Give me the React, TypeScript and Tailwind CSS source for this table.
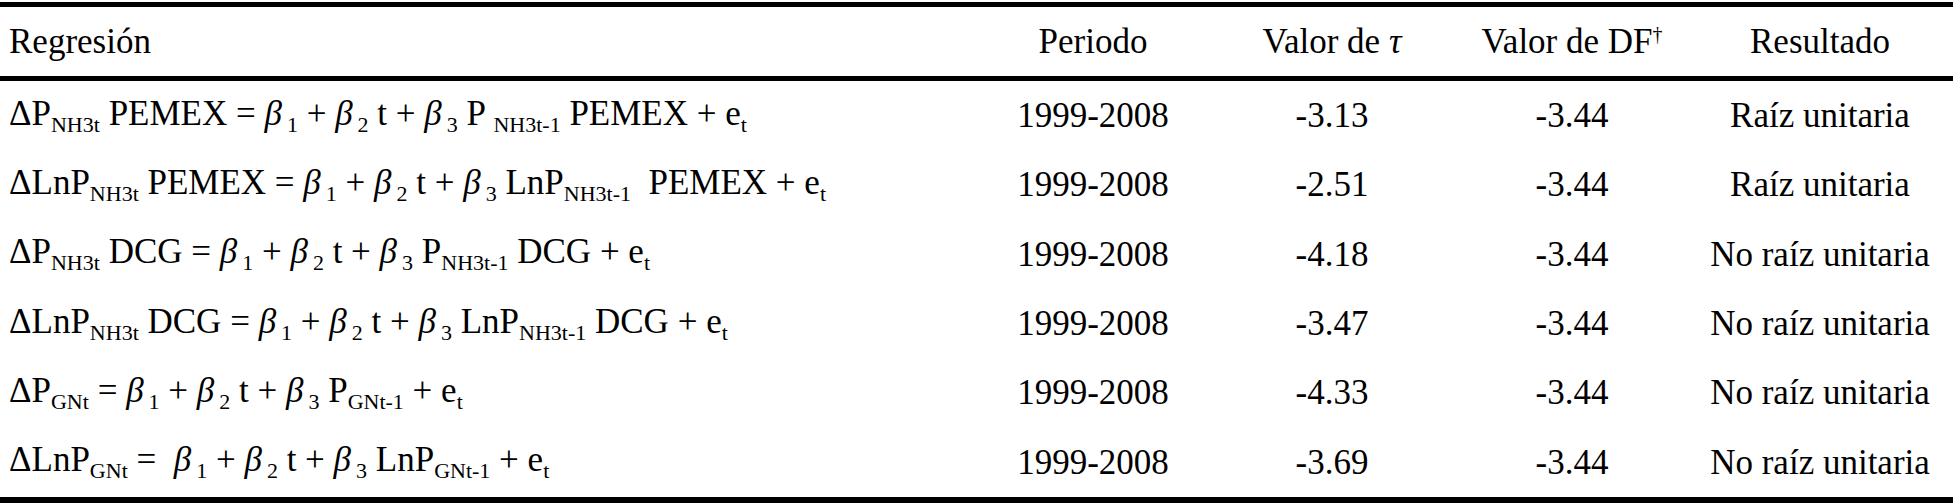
import React from "react";

const cols = "grid grid-cols-[970px_246px_232px_248px_248px] items-center";

function S({ children, className = "" }: { children: React.ReactNode; className?: string }) {
  return <span className={`text-[22px] align-[-7px] ${className}`}>{children}</span>;
}

function B({ n }: { n: string }) {
  return (
    <>
      <i>β</i>
      <S className="ml-[5px]">{n}</S>
    </>
  );
}

interface RowType {
  formula: React.ReactNode;
  tau: string;
  result: string;
}

const rows: RowType[] = [
  {
    formula: (
      <>
        ΔP<S>NH3t</S> PEMEX = <B n="1" /> + <B n="2" /> t + <B n="3" /> P <S>NH3t-1</S> PEMEX + e<S>t</S>
      </>
    ),
    tau: "-3.13",
    result: "Raíz unitaria",
  },
  {
    formula: (
      <>
        ΔLnP<S>NH3t</S> PEMEX = <B n="1" /> + <B n="2" /> t + <B n="3" /> LnP<S>NH3t-1</S>&nbsp; PEMEX + e<S>t</S>
      </>
    ),
    tau: "-2.51",
    result: "Raíz unitaria",
  },
  {
    formula: (
      <>
        ΔP<S>NH3t</S> DCG = <B n="1" /> + <B n="2" /> t + <B n="3" /> P<S>NH3t-1</S> DCG + e<S>t</S>
      </>
    ),
    tau: "-4.18",
    result: "No raíz unitaria",
  },
  {
    formula: (
      <>
        ΔLnP<S>NH3t</S> DCG = <B n="1" /> + <B n="2" /> t + <B n="3" /> LnP<S>NH3t-1</S> DCG + e<S>t</S>
      </>
    ),
    tau: "-3.47",
    result: "No raíz unitaria",
  },
  {
    formula: (
      <>
        ΔP<S>GNt</S> = <B n="1" /> + <B n="2" /> t + <B n="3" /> P<S>GNt-1</S> + e<S>t</S>
      </>
    ),
    tau: "-4.33",
    result: "No raíz unitaria",
  },
  {
    formula: (
      <>
        ΔLnP<S>GNt</S> =&nbsp; <B n="1" /> + <B n="2" /> t + <B n="3" /> LnP<S>GNt-1</S> + e<S>t</S>
      </>
    ),
    tau: "-3.69",
    result: "No raíz unitaria",
  },
];

const App = () => {
  return (
    <div className="w-[1953px] h-[503px] bg-white pt-[2px] text-black text-[35px] leading-none [font-family:'Liberation_Serif',serif] overflow-hidden">
      <div className="border-t-[5px] border-b-[5px] border-black">
        <div className={`${cols} h-[69px]`}>
          <div className="pl-[9px]">Regresión</div>
          <div className="text-center">Periodo</div>
          <div className="text-center">
            Valor de <i>τ</i>
          </div>
          <div className="text-center">
            Valor de DF<span className="text-[20px] align-[12px]">†</span>
          </div>
          <div className="text-center">Resultado</div>
        </div>
      </div>
      <div className="border-b-[6px] border-black">
        {rows.map((r, i) => (
          <div key={i} className={`${cols} h-[69.33px]`}>
            <div className="pl-[9px] whitespace-nowrap">{r.formula}</div>
            <div className="text-center">1999-2008</div>
            <div className="text-center">{r.tau}</div>
            <div className="text-center">-3.44</div>
            <div className="text-center whitespace-nowrap">{r.result}</div>
          </div>
        ))}
      </div>
    </div>
  );
};

export default App;
